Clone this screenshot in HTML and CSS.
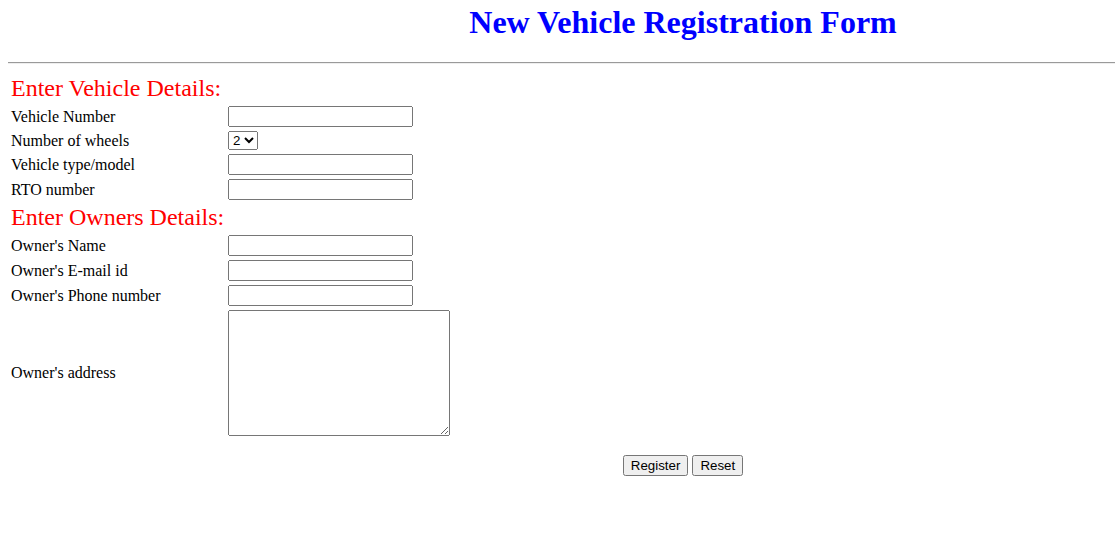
FILE: index.html
```html
<!DOCTYPE html>
<html lang="en">
<head>
<meta charset="utf-8">
<title>New Vehicle Registration Form</title>
<link rel="stylesheet" href="styles.css">
</head>
<body>
<div class="page">
  <h1 class="title">New Vehicle Registration Form</h1>
  <hr class="rule">
  <form class="reg-form">
    <div class="grid">
      <div class="cell section">Enter Vehicle Details:</div>
      <div class="cell"></div>

      <label class="cell label" for="vnum">Vehicle Number</label>
      <div class="cell"><input class="field" id="vnum" type="text"></div>

      <label class="cell label" for="wheels">Number of wheels</label>
      <div class="cell"><select class="picker" id="wheels"><option>2</option><option>3</option><option>4</option></select></div>

      <label class="cell label" for="vtype">Vehicle type/model</label>
      <div class="cell"><input class="field" id="vtype" type="text"></div>

      <label class="cell label" for="rto">RTO number</label>
      <div class="cell"><input class="field" id="rto" type="text"></div>

      <div class="cell section">Enter Owners Details:</div>
      <div class="cell"></div>

      <label class="cell label" for="oname">Owner's Name</label>
      <div class="cell"><input class="field" id="oname" type="text"></div>

      <label class="cell label" for="oemail">Owner's E-mail id</label>
      <div class="cell"><input class="field" id="oemail" type="text"></div>

      <label class="cell label" for="ophone">Owner's Phone number</label>
      <div class="cell"><input class="field" id="ophone" type="text"></div>

      <label class="cell label" for="oaddr">Owner's address</label>
      <div class="cell"><textarea class="area" id="oaddr"></textarea></div>
    </div>
    <div class="actions">
      <button class="btn" type="submit">Register</button>
      <button class="btn" type="reset">Reset</button>
    </div>
  </form>
</div>
</body>
</html>
```

FILE: styles.css
```css
body {
  margin: 0 0 8px 8px;
  font-family: "Liberation Serif", "Times New Roman", serif;
  font-size: 16px;
  color: #000;
  background: #fff;
}

.title {
  margin: 4px 0 21.44px 0;
  padding-left: 243px;
  text-align: center;
  color: #0000ff;
  font-size: 32px;
  font-weight: bold;
}

.rule {
  margin: 8px 0;
  border: 0;
  border-top: 1px solid #9a9a9a;
  border-bottom: 1px solid #eeeeee;
  height: 0;
}

.reg-form {
  margin: 0;
}

.grid {
  display: grid;
  grid-template-columns: 215px auto;
  justify-content: start;
  align-items: center;
  gap: 2px;
  padding: 2px;
}

.cell {
  padding: 1px;
}

.section {
  color: #ff0000;
  font-size: 24px;
  white-space: nowrap;
}

.label {
  display: block;
}

.field {
  box-sizing: border-box;
  width: 185px;
  height: 21px;
  margin: 0;
  display: block;
}

.picker {
  margin: 0;
  display: block;
  font-family: "Liberation Sans", Arial, sans-serif;
  font-size: 13.33px;
}

.area {
  box-sizing: border-box;
  width: 222px;
  height: 126px;
  margin: 0;
  display: block;
}

.actions {
  margin: 16px 0;
  padding-left: 243px;
  text-align: center;
}

.btn {
  font-family: "Liberation Sans", Arial, sans-serif;
  font-size: 13.33px;
  margin: 0;
}
```
